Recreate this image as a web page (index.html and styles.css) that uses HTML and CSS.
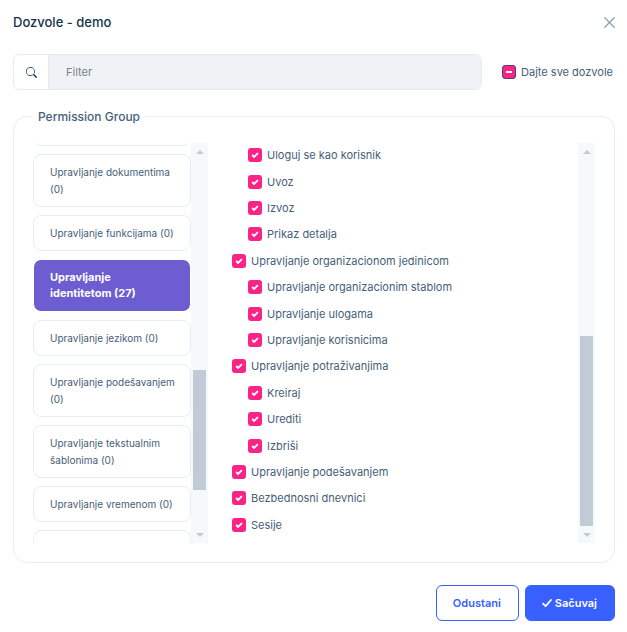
FILE: index.html
```html
<!DOCTYPE html>
<html lang="sr-Latn">
<head>
<meta charset="utf-8">
<meta name="viewport" content="width=device-width, initial-scale=1">
<title>Dozvole - demo</title>
<link rel="stylesheet" href="styles.css">
</head>
<body>
<main class="modal">
  <header class="modal-header">
    <h1 class="title">Dozvole - demo</h1>
    <button class="close" type="button" aria-label="Zatvori">
      <svg width="11" height="11" viewBox="0 0 11 11" fill="none" stroke="currentColor" stroke-width="1.4" stroke-linecap="round"><path d="M.8.8l9.4 9.4M10.2.8L.8 10.2"/></svg>
    </button>
  </header>

  <div class="toolbar">
    <div class="search">
      <label class="search-icon" for="filter" aria-label="Filter">
        <svg width="11" height="11" viewBox="0 0 16 16" fill="currentColor"><path d="M11.742 10.344a6.5 6.5 0 1 0-1.397 1.398l3.85 3.85a1 1 0 0 0 1.415-1.414l-3.868-3.834zM12 6.5a5.5 5.5 0 1 1-11 0 5.5 5.5 0 0 1 11 0z"/></svg>
      </label>
      <input class="search-input" id="filter" type="text" placeholder="Filter">
    </div>
    <label class="option"><input class="check check-mixed" type="checkbox">Dajte sve dozvole</label>
  </div>

  <fieldset class="permissions">
    <legend class="legend">Permission Group</legend>
    <div class="panes">
      <div class="pane pane-groups">
        <nav class="groups">
          <button class="group" type="button"></button>
          <button class="group" type="button">Upravljanje dokumentima (0)</button>
          <button class="group" type="button">Upravljanje funkcijama (0)</button>
          <button class="group group-active" type="button">Upravljanje identitetom (27)</button>
          <button class="group" type="button">Upravljanje jezikom (0)</button>
          <button class="group" type="button">Upravljanje podešavanjem (0)</button>
          <button class="group" type="button">Upravljanje tekstualnim šablonima (0)</button>
          <button class="group" type="button">Upravljanje vremenom (0)</button>
          <button class="group" type="button"></button>
        </nav>
        <div class="scrollbar" aria-hidden="true">
          <span class="arrow arrow-up"></span>
          <span class="track"><span class="thumb thumb-groups"></span></span>
          <span class="arrow arrow-down"></span>
        </div>
      </div>
      <div class="pane pane-tree">
        <ul class="tree">
          <li class="node child"><label class="option"><input class="check" type="checkbox" checked>Uloguj se kao korisnik</label></li>
          <li class="node child"><label class="option"><input class="check" type="checkbox" checked>Uvoz</label></li>
          <li class="node child"><label class="option"><input class="check" type="checkbox" checked>Izvoz</label></li>
          <li class="node child"><label class="option"><input class="check" type="checkbox" checked>Prikaz detalja</label></li>
          <li class="node"><label class="option"><input class="check" type="checkbox" checked>Upravljanje organizacionom jedinicom</label></li>
          <li class="node child"><label class="option"><input class="check" type="checkbox" checked>Upravljanje organizacionim stablom</label></li>
          <li class="node child"><label class="option"><input class="check" type="checkbox" checked>Upravljanje ulogama</label></li>
          <li class="node child"><label class="option"><input class="check" type="checkbox" checked>Upravljanje korisnicima</label></li>
          <li class="node"><label class="option"><input class="check" type="checkbox" checked>Upravljanje potraživanjima</label></li>
          <li class="node child"><label class="option"><input class="check" type="checkbox" checked>Kreiraj</label></li>
          <li class="node child"><label class="option"><input class="check" type="checkbox" checked>Urediti</label></li>
          <li class="node child"><label class="option"><input class="check" type="checkbox" checked>Izbriši</label></li>
          <li class="node"><label class="option"><input class="check" type="checkbox" checked>Upravljanje podešavanjem</label></li>
          <li class="node"><label class="option"><input class="check" type="checkbox" checked>Bezbednosni dnevnici</label></li>
          <li class="node"><label class="option"><input class="check" type="checkbox" checked>Sesije</label></li>
        </ul>
        <div class="scrollbar" aria-hidden="true">
          <span class="arrow arrow-up"></span>
          <span class="track"><span class="thumb thumb-tree"></span></span>
          <span class="arrow arrow-down"></span>
        </div>
      </div>
    </div>
  </fieldset>

  <footer class="actions">
    <button class="btn btn-outline" type="button">Odustani</button>
    <button class="btn btn-primary" type="button"><svg width="10" height="10" viewBox="0 0 10 10" fill="none" stroke="currentColor" stroke-width="1.8" stroke-linecap="round" stroke-linejoin="round"><path d="M1 5.6l2.6 2.6L9 2"/></svg>Sačuvaj</button>
  </footer>
</main>
</body>
</html>
```
FILE: styles.css
```css
* {
  box-sizing: border-box;
}

body {
  margin: 0;
  background: #fff;
  color: #456079;
  font: 400 11px/16px Inter, "Liberation Sans", sans-serif;
}

button,
input {
  font: inherit;
  color: inherit;
}

.modal {
  padding: 12px 12px 11px 13px;
}

.modal-header {
  display: flex;
  align-items: center;
  justify-content: space-between;
  height: 20px;
}

.title {
  margin: 0;
  color: #12344d;
  font-size: 13px;
  font-weight: 500;
  line-height: 20px;
}

.close {
  display: flex;
  padding: 0;
  border: 0;
  background: none;
  color: #93a4b1;
}

.toolbar {
  display: flex;
  align-items: center;
  gap: 20px;
  margin-top: 22px;
  padding-right: 2px;
}

.search {
  display: flex;
  flex: 1;
  height: 36px;
  border: 1px solid #e4ebf2;
  border-radius: 6px;
  overflow: hidden;
}

.search-icon {
  display: flex;
  align-items: center;
  justify-content: center;
  width: 34px;
  color: #12344d;
}

.search-input {
  flex: 1;
  min-width: 0;
  padding: 0 17px;
  border: 0;
  border-left: 1px solid #e4ebf2;
  background: #eff3f6;
  outline: 0;
}

.search-input::placeholder {
  color: #76818a;
  opacity: 1;
}

.option {
  display: flex;
  align-items: center;
  gap: 5px;
  white-space: nowrap;
}

.check {
  flex: none;
  width: 14px;
  height: 14px;
  margin: 0;
  border-radius: 3px;
  appearance: none;
  background: #fa2486 center / 14px 14px no-repeat;
}

.check:checked {
  background-image: url("data:image/svg+xml,%3Csvg xmlns='http://www.w3.org/2000/svg' viewBox='0 0 14 14'%3E%3Cpath d='M4.2 7l1.9 1.9 3.8-3.7' fill='none' stroke='white' stroke-width='1.8'/%3E%3C/svg%3E");
}

.check-mixed {
  border: 1px solid #4a4478;
  background-image: linear-gradient(#fff, #fff);
  background-size: 6px 2px;
}

.permissions {
  min-width: 0;
  margin: 18px 0 0;
  padding: 18px 19px 19px;
  border: 1px solid #e6edf4;
  border-radius: 14px;
}

.legend {
  padding: 0 5px;
  font-size: 12px;
  font-weight: 500;
  line-height: 17px;
}

.panes {
  display: flex;
  gap: 24px;
  height: 400px;
}

.pane {
  display: flex;
  overflow: hidden;
}

.pane-groups {
  flex: none;
  width: 175px;
}

.pane-tree {
  flex: 1;
}

.groups {
  display: flex;
  flex: 1;
  flex-direction: column;
  gap: 8px;
  margin-top: -33px;
}

.group {
  flex: none;
  min-height: 36px;
  padding: 9px 12px 8px 16px;
  border: 1px solid #e6edf4;
  border-radius: 8px;
  background: #fff;
  font-size: 10px;
  line-height: 17px;
  text-align: left;
}

.group-active {
  padding: 9px 16px 10px;
  border-color: transparent;
  background: #6c5dd0 padding-box;
  color: #fff;
  font-size: 11px;
  font-weight: 700;
  line-height: 16px;
}

.tree {
  display: grid;
  flex: 1;
  grid-auto-rows: 1fr;
  align-items: center;
  margin: -1px 0 0;
  padding: 0 0 5px;
  list-style: none;
}

.child {
  padding-left: 16px;
}

.scrollbar {
  display: flex;
  flex: none;
  flex-direction: column;
  align-items: center;
  width: 17px;
  background: #f5f9fb;
}

.arrow {
  display: flex;
  align-items: center;
  justify-content: center;
  height: 17px;
}

.arrow::before {
  content: "";
  border: 4px solid transparent;
}

.arrow-up::before {
  border-top: 0;
  border-bottom-color: #c1cbd5;
}

.arrow-down::before {
  border-bottom: 0;
  border-top-color: #c1cbd5;
}

.track {
  display: flex;
  flex: 1;
  flex-direction: column;
  justify-content: flex-end;
}

.thumb {
  width: 13px;
  background: #c1cbd5;
}

.thumb-groups {
  height: 120px;
  margin-bottom: 36px;
}

.thumb-tree {
  height: 190px;
}

.actions {
  display: flex;
  justify-content: flex-end;
  gap: 6px;
  margin-top: 22px;
}

.btn {
  display: flex;
  align-items: center;
  justify-content: center;
  gap: 3px;
  height: 36px;
  padding: 0 17px 0 16px;
  border: 1px solid #3760ff;
  border-radius: 6px;
  font-weight: 600;
}

.btn-outline {
  background: #fff;
  color: #3760ff;
}

.btn-primary {
  background: #3760ff;
  color: #fff;
}
```
